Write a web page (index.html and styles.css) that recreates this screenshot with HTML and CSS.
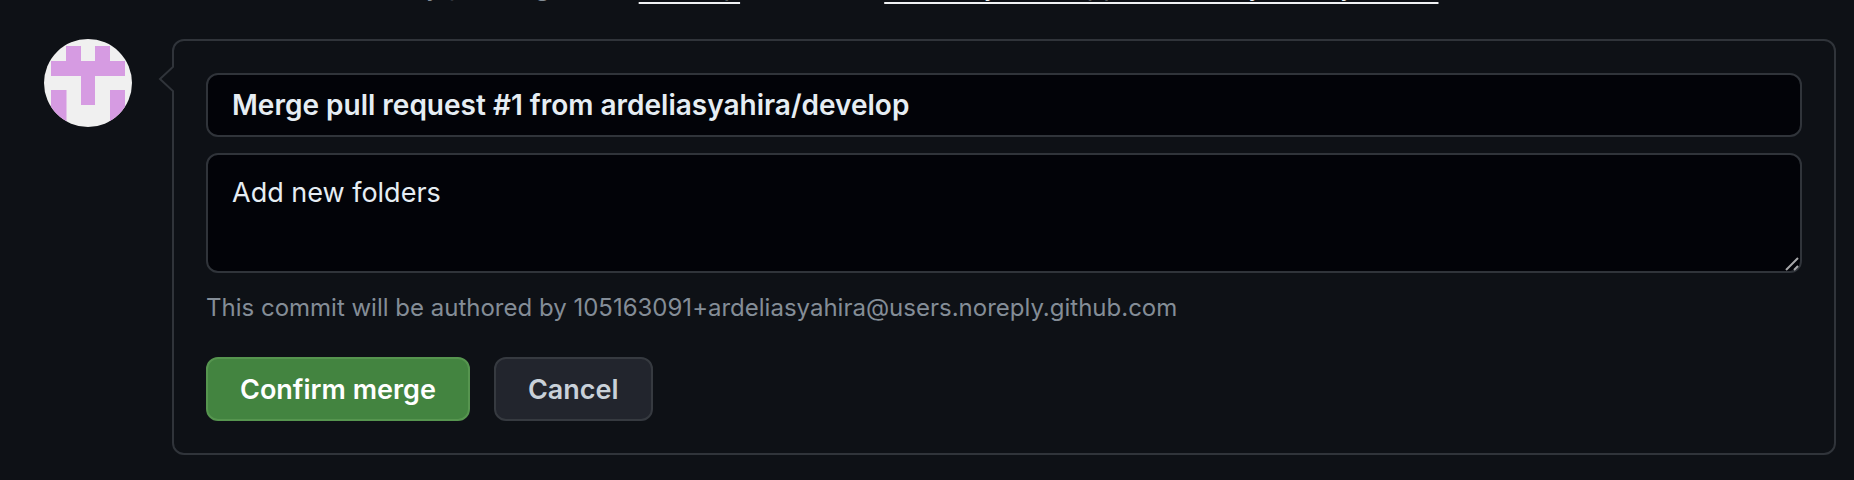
FILE: index.html
```html
<!DOCTYPE html>
<html lang="en">
<head>
<meta charset="utf-8">
<title>Merge pull request</title>
<link rel="stylesheet" href="styles.css">
</head>
<body>
<div class="hint"><p class="hint-text">Add more commits by pushing to the <a href="#develop">develop</a> branch on <a href="#repository">ardeliasyahira/app_laboratoryholidayrecord</a></p></div>
<main class="merge">
  <svg class="avatar" viewBox="0 0 88 88" role="img" aria-label="ardeliasyahira">
    <defs><clipPath id="round"><circle cx="44" cy="44" r="44"/></clipPath></defs>
    <g clip-path="url(#round)">
      <rect width="88" height="88" fill="#f0f0f0"/>
      <path fill="#d69be2" d="M22 7h15v15h14V7h15v15h15v15H51v29H37V37H7V22h15zM7 51h15.500v37H7zM66 51h15v37H66z"/>
    </g>
  </svg>
  <form class="panel">
    <svg class="caret" viewBox="0 0 16 28" aria-hidden="true"><path d="M16 1L2 14L16 27" /></svg>
    <input class="field title" type="text" aria-label="Commit title" value="Merge pull request #1 from ardeliasyahira/develop">
    <div class="message">
      <textarea class="field body" aria-label="Commit message">Add new folders</textarea>
      <svg class="grip" viewBox="0 0 14 14" aria-hidden="true"><path d="M1 13L13 1M9 13L13 9"/></svg>
    </div>
    <p class="author">This commit will be authored by 105163091+ardeliasyahira@users.noreply.github.com</p>
    <div class="actions">
      <button class="button confirm" type="button">Confirm merge</button>
      <button class="button cancel" type="button">Cancel</button>
    </div>
  </form>
</main>
</body>
</html>
```
FILE: styles.css
```css
* {
  box-sizing: border-box;
}

body {
  margin: 0;
  background: #0e1116;
  color: #e6edf3;
  font-family: Inter, "Liberation Sans", sans-serif;
}

.hint {
  display: flex;
  align-items: flex-end;
  height: 7px;
  padding-left: 162px;
  overflow: hidden;
}

.hint-text {
  flex: none;
  margin: 0;
  color: #848d97;
  font-size: 27px;
  line-height: 42px;
}

.hint-text a {
  color: #f0f2f4;
  text-decoration: underline;
  text-decoration-thickness: 2px;
  text-decoration-skip-ink: none;
  text-underline-offset: 7px;
}

.merge {
  display: flex;
  align-items: flex-start;
  gap: 40px;
  padding: 32px 18px 24px 44px;
}

.avatar {
  flex: none;
  width: 88px;
  height: 88px;
}

.panel {
  position: relative;
  flex: 1;
  min-width: 0;
  padding: 32px;
  border: 2px solid #30343a;
  border-radius: 12px;
}

.caret {
  position: absolute;
  top: 24px;
  left: -16px;
  width: 16px;
  height: 28px;
  fill: #0e1116;
  stroke: #30343a;
  stroke-width: 2;
}

.field {
  display: block;
  width: 100%;
  padding: 0 24px;
  border: 2px solid #30343a;
  border-radius: 12px;
  outline: 0;
  background: #020308;
  color: #e6edf3;
  font-family: inherit;
  font-size: 27px;
}

.title {
  height: 64px;
  font-size: 28px;
  font-weight: 600;
}

.message {
  position: relative;
  margin-top: 16px;
}

.body {
  height: 120px;
  padding-top: 16px;
  line-height: 44px;
  resize: none;
}

.grip {
  position: absolute;
  right: 3px;
  bottom: 2px;
  width: 14px;
  height: 14px;
  fill: none;
  stroke: #a6a7a9;
  stroke-width: 2;
}

.author {
  margin: 16px 0 30px;
  color: #848d97;
  font-size: 24px;
  line-height: 38px;
}

.actions {
  display: flex;
  gap: 24px;
}

.button {
  height: 64px;
  padding: 0 32px;
  border: 2px solid;
  border-radius: 12px;
  font-family: inherit;
  font-size: 27px;
  font-weight: 600;
}

.confirm {
  border-color: #56954f;
  background: #438440;
  color: #ffffff;
}

.cancel {
  border-color: #363a40;
  background: #22252d;
  color: #c9d1d9;
}
```
